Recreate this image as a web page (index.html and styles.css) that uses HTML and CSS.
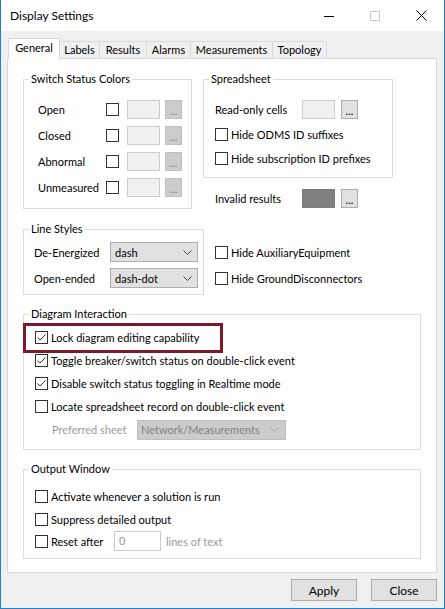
FILE: index.html
```html
<!DOCTYPE html>
<html>
<head>
<meta charset="utf-8">
<link rel="stylesheet" href="styles.css">
</head>
<body>
<div class="window">
  <div class="titlebar">
    <div class="title">Display Settings</div>
    <div class="winctrls">
      <div class="wbtn"><svg width="10" height="10" viewBox="0 0 10 10"><path d="M0 5.5H10" stroke="#000" stroke-width="1"/></svg></div>
      <div class="wbtn"><svg width="10" height="10" viewBox="0 0 10 10"><rect x="0.5" y="0.5" width="9" height="9" fill="none" stroke="#cccccc"/></svg></div>
      <div class="wbtn"><svg width="11" height="11" viewBox="0 0 11 11"><path d="M0.5 0.5L10.5 10.5M10.5 0.5L0.5 10.5" stroke="#000" stroke-width="1"/></svg></div>
    </div>
  </div>
  <div class="client">
    <div class="tabs">
      <div class="tab sel t-gen">General</div>
      <div class="tab t-lab">Labels</div>
      <div class="tab t-res">Results</div>
      <div class="tab t-ala">Alarms</div>
      <div class="tab t-mea">Measurements</div>
      <div class="tab t-top">Topology</div>
    </div>
    <div class="panel">
      <div class="row1">
        <fieldset class="grp ssc">
          <legend>Switch Status Colors</legend>
          <div class="ssc-body">
            <div class="crow"><span class="clabel">Open</span><span class="cb"></span><span class="swatch"></span><span class="dots dis">...</span></div>
            <div class="crow"><span class="clabel">Closed</span><span class="cb"></span><span class="swatch"></span><span class="dots dis">...</span></div>
            <div class="crow"><span class="clabel">Abnormal</span><span class="cb"></span><span class="swatch"></span><span class="dots dis">...</span></div>
            <div class="crow"><span class="clabel">Unmeasured</span><span class="cb"></span><span class="swatch"></span><span class="dots dis">...</span></div>
          </div>
        </fieldset>
        <div class="rcol">
          <fieldset class="grp sheet">
            <legend>Spreadsheet</legend>
            <div class="sheet-body">
              <div class="srow"><span class="slabel">Read-only cells</span><span class="swatch"></span><span class="dots">...</span></div>
              <div class="chk h24"><span class="cb"></span><span>Hide ODMS ID suffixes</span></div>
              <div class="chk h24"><span class="cb"></span><span>Hide subscription ID prefixes</span></div>
            </div>
          </fieldset>
          <div class="invalid"><span class="slabel">Invalid results</span><span class="swatch dark"></span><span class="dots">...</span></div>
        </div>
      </div>

      <div class="row2">
        <fieldset class="grp lines">
          <legend>Line Styles</legend>
          <div class="lines-body">
            <div class="lrow"><span class="llabel">De-Energized</span><div class="combo"><span>dash</span><svg class="chev" width="9" height="5" viewBox="0 0 9 5"><path d="M0.5 0.5L4.5 4.5L8.5 0.5" fill="none" stroke="#444" stroke-width="1"/></svg></div></div>
            <div class="lrow"><span class="llabel">Open-ended</span><div class="combo"><span>dash-dot</span><svg class="chev" width="9" height="5" viewBox="0 0 9 5"><path d="M0.5 0.5L4.5 4.5L8.5 0.5" fill="none" stroke="#444" stroke-width="1"/></svg></div></div>
          </div>
        </fieldset>
        <div class="rchecks">
          <div class="chk h26"><span class="cb"></span><span>Hide AuxiliaryEquipment</span></div>
          <div class="chk h26"><span class="cb"></span><span>Hide GroundDisconnectors</span></div>
        </div>
      </div>

      <fieldset class="grp wide diag">
        <legend>Diagram Interaction</legend>
        <div class="diag-body">
          <div class="chk h23 marked"><span class="cb on"><svg width="11" height="11" viewBox="0 0 11 11"><path d="M1.5 5.5L4 8L9.5 2.5" fill="none" stroke="#333" stroke-width="1"/></svg></span><span>Lock diagram editing capability</span><span class="hl"></span></div>
          <div class="chk h23"><span class="cb on"><svg width="11" height="11" viewBox="0 0 11 11"><path d="M1.5 5.5L4 8L9.5 2.5" fill="none" stroke="#333" stroke-width="1"/></svg></span><span>Toggle breaker/switch status on double-click event</span></div>
          <div class="chk h23"><span class="cb on"><svg width="11" height="11" viewBox="0 0 11 11"><path d="M1.5 5.5L4 8L9.5 2.5" fill="none" stroke="#333" stroke-width="1"/></svg></span><span>Disable switch status toggling in Realtime mode</span></div>
          <div class="chk h23"><span class="cb"></span><span>Locate spreadsheet record on double-click event</span></div>
          <div class="prow"><span class="plabel">Preferred sheet</span><div class="combo disabled"><span>Network/Measurements</span><svg class="chev" width="9" height="5" viewBox="0 0 9 5"><path d="M0.5 0.5L4.5 4.5L8.5 0.5" fill="none" stroke="#a6a6a6" stroke-width="1"/></svg></div></div>
        </div>
      </fieldset>

      <fieldset class="grp wide output">
        <legend>Output Window</legend>
        <div class="out-body">
          <div class="chk h23"><span class="cb"></span><span>Activate whenever a solution is run</span></div>
          <div class="chk h22"><span class="cb"></span><span>Suppress detailed output</span></div>
          <div class="chk h22"><span class="cb"></span><span class="rlabel">Reset after</span><span class="numbox">0</span><span class="muted">lines of text</span></div>
        </div>
      </fieldset>
    </div>
    <div class="actions">
      <button class="btn">Apply</button>
      <button class="btn">Close</button>
    </div>
  </div>
</div>
</body>
</html>
```

FILE: styles.css
```css
* { box-sizing: border-box; }

body {
  margin: 0;
  font-family: Lato, "Liberation Sans", sans-serif;
  font-size: 11px;
  color: #000;
  background: #fff;
}

.window {
  width: 445px;
  height: 609px;
  border: 1px solid #1883d7;
  border-top: 0;
  background: #f0f0f0;
  display: flex;
  flex-direction: column;
}

.titlebar {
  height: 31px;
  flex: none;
  background: #fff;
  display: flex;
  align-items: center;
}

.title {
  flex: 1;
  padding-left: 9px;
  font-size: 12px;
}

.winctrls { display: flex; height: 31px; }

.wbtn {
  width: 46px;
  height: 31px;
  display: flex;
  align-items: center;
  justify-content: center;
}

.wbtn svg { display: block; }

.client {
  flex: 1;
  display: flex;
  flex-direction: column;
  padding: 7px 7px 7px 6px;
}

.tabs {
  display: flex;
  align-items: flex-end;
  height: 20px;
  flex: none;
}

.tab {
  height: 17px;
  border: 1px solid #d9d9d9;
  border-bottom: 0;
  margin-left: -1px;
  background: #f0f0f0;
  text-align: center;
  line-height: 16px;
  white-space: nowrap;
}

.tab.sel {
  height: 21px;
  margin-left: 1px;
  margin-bottom: -1px;
  background: #fff;
  line-height: 18px;
  position: relative;
  z-index: 1;
}

.t-gen { width: 52px; }
.t-lab { width: 41px; }
.t-res { width: 48px; }
.t-ala { width: 45px; }
.t-mea { width: 83px; }
.t-top { width: 55px; }

.panel {
  height: 515px;
  flex: none;
  background: #fff;
  border: 1px solid #d9d9d9;
  padding: 12px 15px 0 15px;
}

/* group boxes */
.grp {
  margin: 0;
  padding: 0;
  min-width: 0;
  border: 1px solid #dcdcdc;
}

.grp legend {
  margin-left: 5px;
  padding: 0 2px;
  font-size: 11px;
  line-height: 16px;
}

.row1 {
  display: flex;
  align-items: flex-start;
  gap: 11px;
}

.ssc { width: 169px; }
.ssc-body { padding: 9px 0 8px 14px; }

.crow {
  height: 26px;
  display: flex;
  align-items: center;
}

.clabel { width: 68px; flex: none; }

.cb {
  width: 13px;
  height: 13px;
  flex: none;
  border: 1px solid #333;
  background: #fff;
  display: flex;
  align-items: center;
  justify-content: center;
}

.cb svg { display: block; }

.swatch {
  width: 33px;
  height: 19px;
  flex: none;
  background: #f0f0f0;
  border: 1px solid #cccccc;
}

.crow .swatch { margin-left: 8px; }

.swatch.dark {
  background: #808080;
  border-color: #7a7a7a;
}

.dots {
  width: 17px;
  height: 19px;
  flex: none;
  margin-left: 5px;
  border: 1px solid #adadad;
  background: #e1e1e1;
  text-align: center;
  line-height: 20px;
  font-size: 11px;
  color: #000;
}

.dots.dis {
  background: #cccccc;
  border-color: #bfbfbf;
  color: #838383;
}

.rcol { width: 190px; flex: none; }
.sheet { width: 190px; }
.sheet-body { padding: 9px 0 7px 11px; }

.srow, .invalid {
  display: flex;
  align-items: center;
}

.srow { height: 26px; }

.slabel { width: 87px; flex: none; }

.srow .dots, .invalid .dots { margin-left: 6px; }

.invalid {
  margin-top: 9px;
  height: 22px;
  padding-left: 12px;
}

.chk {
  display: flex;
  align-items: center;
  gap: 3px;
  white-space: nowrap;
}

.h22 { height: 22px; }
.h23 { height: 23px; }
.h24 { height: 24px; }
.h26 { height: 26px; }

.row2 {
  display: flex;
  align-items: flex-start;
  margin-top: 12px;
}

.lines { width: 181px; flex: none; }
.lines-body { padding: 2px 0 3px 10px; }

.lrow {
  height: 26px;
  display: flex;
  align-items: center;
}

.llabel { width: 76px; flex: none; }

.combo {
  width: 88px;
  height: 20px;
  flex: none;
  display: flex;
  align-items: center;
  padding: 0 5px 0 4px;
  border: 1px solid #adadad;
  background: #e1e1e1;
}

.combo .chev { margin-left: auto; display: block; }

.combo.disabled {
  width: 149px;
  border-color: #bfbfbf;
  background: #cccccc;
  color: #838383;
  padding-left: 3px;
  padding-right: 6px;
}

.rchecks {
  margin-left: 11px;
  padding-top: 18px;
}

.wide { width: 398px; }

.diag { margin-top: 11px; }
.diag-body { padding: 4px 0 8px 11px; }

.marked { position: relative; }

.hl {
  position: absolute;
  left: -12px;
  top: -3px;
  width: 200px;
  height: 30px;
  border: 3px solid #7b1a2b;
}

.prow {
  height: 23px;
  display: flex;
  align-items: center;
  padding-left: 17px;
}

.plabel {
  width: 85px;
  flex: none;
  color: #9a9a9a;
}

.output { margin-top: 11px; }
.out-body { padding: 8px 0 6px 11px; }

.rlabel { width: 60px; flex: none; }

.numbox {
  width: 47px;
  height: 20px;
  flex: none;
  border: 1px solid #cccccc;
  background: #fff;
  color: #9a9a9a;
  padding-left: 4px;
  line-height: 18px;
}

.muted {
  color: #9a9a9a;
  margin-left: 2px;
}

.actions {
  display: flex;
  justify-content: flex-end;
  gap: 14px;
  margin-top: 6px;
  flex: none;
}

.btn {
  width: 66px;
  height: 22px;
  margin: 0;
  padding: 0;
  border: 1px solid #adadad;
  background: #e1e1e1;
  font: inherit;
  font-size: 12px;
  color: #000;
  display: flex;
  align-items: center;
  justify-content: center;
}
```
